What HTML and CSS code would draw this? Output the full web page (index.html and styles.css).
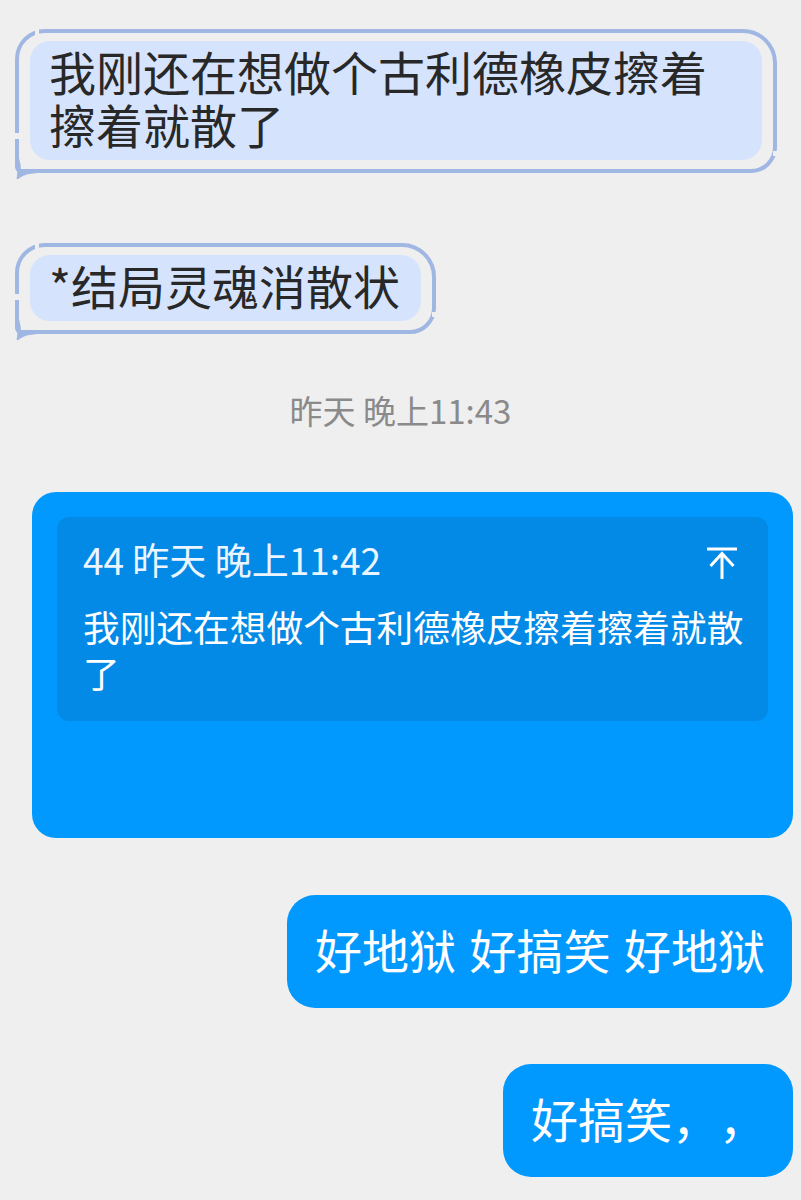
FILE: index.html
```html
<!DOCTYPE html>
<html lang="zh-CN">
<head>
    <meta charset="UTF-8">
    <meta name="viewport" content="width=device-width, initial-scale=1.0">
    <title>聊天记录</title>
    <link rel="stylesheet" href="styles.css">
</head>
<body>
    <div class="chat">
        <!-- Incoming messages, hand-drawn bubble theme -->
        <div class="frame frame-wide">
            <div class="bubble-light">我刚还在想做个古利德橡皮擦着擦着就散了</div>
            <i class="gap gap-corner"></i>
            <i class="gap gap-left"></i>
            <i class="gap gap-right"></i>
            <svg class="tail" viewBox="0 0 30 24"><path d="M4 3 Q7 14 6 21 Q11 17 24 16"/></svg>
        </div>

        <div class="frame frame-next">
            <div class="bubble-light">*结局灵魂消散状</div>
            <i class="gap gap-corner"></i>
            <i class="gap gap-left"></i>
            <i class="gap gap-right"></i>
            <svg class="tail" viewBox="0 0 30 24"><path d="M4 3 Q7 14 6 21 Q11 17 24 16"/></svg>
        </div>

        <div class="time">昨天 晚上11:43</div>

        <!-- Outgoing reply with quoted message -->
        <div class="card">
            <div class="quote">
                <div class="quote-head">
                    <span>44 昨天 晚上11:42</span>
                    <svg class="to-top" viewBox="0 0 32 34"><path d="M1 2 H31 M16 7 V32 M4.5 19 L16 6.5 L27.5 19"/></svg>
                </div>
                <div class="quote-text">我刚还在想做个古利德橡皮擦着擦着就散了</div>
            </div>
        </div>

        <div class="bubble-blue">好地狱 好搞笑 好地狱</div>
        <div class="bubble-blue bubble-last">好搞笑，，</div>
    </div>
</body>
</html>
```

FILE: styles.css
```css
/* Global styles */
body {
    margin: 0;
    padding: 0;
    background: #efefef;
    font-family: "Noto Sans CJK SC", "Noto Sans", sans-serif;
    text-spacing-trim: space-all;
}

.chat {
    display: flex;
    flex-direction: column;
    padding-top: 29px;
}

/* Hand-drawn frame round the light bubbles */
.frame {
    position: relative;
    align-self: flex-start;
    margin-left: 15px;
    border: 4px solid #a0b7e3;
    border-radius: 30px 34px 26px 6px;
    padding: 8px 11px 9px 11px;
}

.frame-wide {
    align-self: stretch;
    margin-right: 24px;
}

.frame-next {
    margin-top: 70px;
}

.bubble-light {
    background: #d5e3fd;
    border-radius: 20px;
    padding: 3px 21px 10px 19px;
    font-size: 47px;
    line-height: 53px;
    color: #282828;
}

/* Little breaks in the outline */
.gap {
    position: absolute;
    background: #efefef;
}

.gap-corner {
    left: 16px;
    top: -4px;
    width: 4px;
    height: 6px;
}

.gap-left {
    left: -4px;
    bottom: 30px;
    width: 4px;
    height: 6px;
}

.gap-right {
    right: -4px;
    bottom: 13px;
    width: 4px;
    height: 5px;
}

.tail {
    position: absolute;
    left: -6px;
    bottom: -10px;
    width: 30px;
    height: 24px;
    fill: none;
    stroke: #a0b7e3;
    stroke-width: 4;
    stroke-linecap: round;
}

/* Timestamp */
.time {
    align-self: center;
    margin-top: 56px;
    font-size: 33px;
    line-height: 40px;
    color: #8a8a8a;
}

/* Reply card */
.card {
    margin: 62px 8px 0 32px;
    padding: 25px 25px 117px;
    background: #0299ff;
    border-radius: 24px;
}

.quote {
    background: #0389e6;
    border-radius: 12px;
    padding: 20px 12px 26px 26px;
}

.quote-head {
    display: flex;
    justify-content: space-between;
    align-items: flex-start;
    font-size: 37px;
    line-height: 44px;
    color: #eaf5ff;
}

.to-top {
    width: 32px;
    height: 34px;
    margin: 10px 18px 0 0;
    fill: none;
    stroke: #fff;
    stroke-width: 3;
}

.quote-text {
    margin-top: 22px;
    font-size: 36.7px;
    line-height: 46px;
    color: #fff;
}

/* Outgoing bubbles */
.bubble-blue {
    align-self: flex-end;
    margin: 57px 9px 0 0;
    padding: 27px 27px 33px 28px;
    background: #0299ff;
    border-radius: 28px;
    font-size: 47px;
    line-height: 53px;
    word-spacing: 3px;
    color: #fff;
}

.bubble-last {
    margin: 56px 8px 0 0;
}
```
